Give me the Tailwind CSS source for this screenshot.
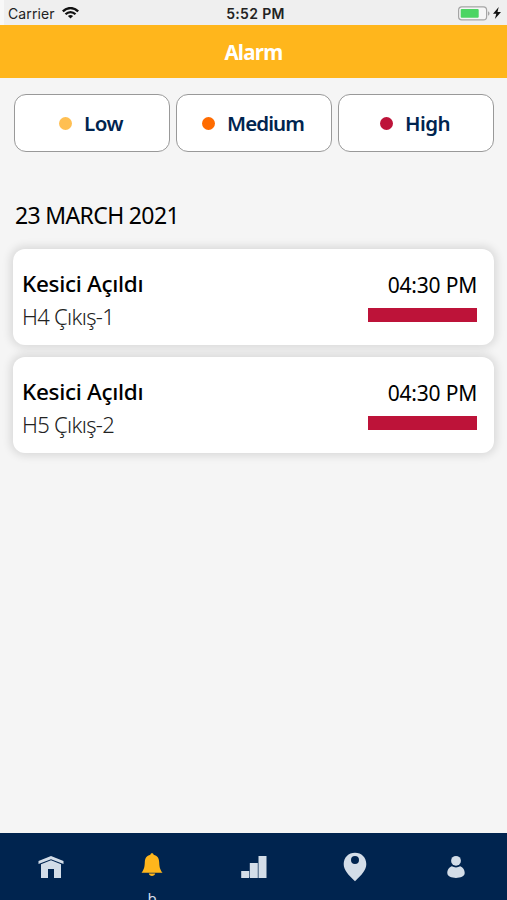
<!DOCTYPE html>
<html lang="tr">
<head>
<meta charset="utf-8">
<title>Alarm</title>
<script src="https://cdn.jsdelivr.net/npm/@tailwindcss/browser@4"></script>
</head>
<body class="w-[507px] h-[900px] overflow-hidden bg-[#f5f5f5] font-['Noto_Sans',sans-serif] text-black">
<div class="flex h-[900px] flex-col">
  <div class="grid h-[25px] shrink-0 grid-cols-3 items-center border-l-4 border-[#f8f8f8] bg-[#efefef] pt-[3px] font-['Inter',sans-serif] text-[14px] leading-none text-[#222]">
    <div class="flex items-center gap-[7px] pl-1">
      <span class="tracking-[0.1px]">Carrier</span>
      <svg class="mb-0.5 h-3 w-[17px]" viewBox="0 0 17 12" fill="none" stroke="#111" stroke-width="2.3"><path d="M.8 4.4C5.2-.1 11.8-.1 16.2 4.4M3.5 7.2c2.9-2.9 7.1-2.9 10 0"/><path d="M8.5 11.6 5.9 9c1.4-1.4 3.8-1.4 5.2 0z" fill="#111" stroke="none"/></svg>
    </div>
    <span class="text-center text-[14px] font-semibold tracking-[0.35px] whitespace-nowrap">5:52 PM</span>
    <div class="flex items-center justify-end gap-[3px] pr-[6px] pb-[2px]">
      <svg class="h-[15px] w-8" viewBox="0 0 32 15"><rect x=".6" y=".9" width="28" height="13" rx="3.2" fill="#f6f6f6" stroke="#a5a5a5" stroke-width="1.2"/><rect x="2.7" y="3" width="18" height="8.8" rx="1" fill="#4cd563"/><path d="M30 5.200c2 .8 2 3.700 0 4.500z" fill="#a5a5a5"/></svg>
      <svg class="h-3 w-2" viewBox="0 0 8 12"><path d="M5.700 0 0 6.800h3.300L1.900 12 8 4.900H4.500z" fill="#111"/></svg>
    </div>
  </div>
  <header class="flex h-[53px] shrink-0 items-center justify-center bg-[#ffb61c] pt-0.5 text-[20.5px] font-bold tracking-[-0.7px] text-white"><h1>Alarm</h1></header>

  <main class="flex-1 px-[13px] pt-4">
    <div class="grid grid-cols-3 gap-1.5 pl-px text-[20.5px] font-semibold text-[#00244f]">
      <button class="flex h-[58px] items-center justify-center gap-[12px] rounded-xl border border-[#999] bg-white pr-[2px]"><span class="size-[13px] rounded-full bg-[#ffbf52]"></span><span class="tracking-[-0.4px]">Low</span></button>
      <button class="flex h-[58px] items-center justify-center gap-[12px] rounded-xl border border-[#999] bg-white pr-[2px]"><span class="size-[13px] rounded-full bg-[#ff6b00]"></span><span class="tracking-[-0.9px]">Medium</span></button>
      <button class="flex h-[58px] items-center justify-center gap-[12px] rounded-xl border border-[#999] bg-white pr-[2px]"><span class="size-[13px] rounded-full bg-[#bd1339]"></span><span class="tracking-[-0.6px]">High</span></button>
    </div>
    <h2 class="mt-[46px] ml-0.5 h-[35px] text-[23px] leading-[34px] tracking-[-0.65px]">23 MARCH 2021</h2>
    <div class="mt-4 flex flex-col gap-3">
      <article class="flex h-[96px] justify-between rounded-xl bg-white pt-[17px] pr-[17px] pl-[9px] shadow-[0_0_9px_3px_rgba(0,0,0,0.11)]">
        <div>
          <h3 class="h-[33px] text-[22.5px] leading-[36px] font-medium tracking-[-0.3px]">Kesici Açıldı</h3>
          <p class="h-[33px] text-[22px] leading-[35px] font-light tracking-[-0.7px] text-[#222]">H4 Çıkış-1</p>
        </div>
        <div class="flex flex-col items-end">
          <time class="h-[42px] text-[21px] leading-[39px] tracking-[-0.2px]">04:30 PM</time>
          <span class="h-[14px] w-[109px] bg-[#bd1339]"></span>
        </div>
      </article>
      <article class="flex h-[96px] justify-between rounded-xl bg-white pt-[17px] pr-[17px] pl-[9px] shadow-[0_0_9px_3px_rgba(0,0,0,0.11)]">
        <div>
          <h3 class="h-[33px] text-[22.5px] leading-[36px] font-medium tracking-[-0.3px]">Kesici Açıldı</h3>
          <p class="h-[33px] text-[22px] leading-[35px] font-light tracking-[-0.7px] text-[#222]">H5 Çıkış-2</p>
        </div>
        <div class="flex flex-col items-end">
          <time class="h-[42px] text-[21px] leading-[39px] tracking-[-0.2px]">04:30 PM</time>
          <span class="h-[14px] w-[109px] bg-[#bd1339]"></span>
        </div>
      </article>
    </div>
  </main>

  <nav class="grid h-[67px] shrink-0 grid-cols-5 overflow-hidden bg-[#00244f] text-[#d3dde8]">
    <a class="flex justify-center pt-[22px]"><svg class="h-6 w-[26px]" viewBox="0 0 26 24" fill="currentColor"><path d="M.5 6 13 1l12.500 5v3L13 4.200.5 9z"/><path d="M3 9.300 13 5.200l10 4.100V23h-7v-9h-6v9H3z"/></svg></a>
    <a class="flex flex-col items-center pt-[20px] text-[#ffb61c]"><svg class="h-6 w-[22px] shrink-0" viewBox="0 0 22 24" fill="currentColor"><path d="M11 .3c1 0 1.500.6 1.600 1.400 3.900.8 5.400 3.600 5.600 7.500.2 5 .8 7.300 3.300 10.600H.5c2.500-3.300 3.100-5.600 3.300-10.600.2-3.900 1.700-6.700 5.600-7.500C9.500.9 10 .3 11 .3zM7.800 20.500h6.400c-.3 3.300-6.100 3.300-6.400 0z"/></svg><span class="mt-[11px] text-[15px] leading-5 text-[#d3dde8]">b</span></a>
    <a class="flex justify-center pt-[22px] pl-[2px]"><svg class="h-6 w-[26px]" viewBox="0 0 26 24" fill="currentColor"><path d="M.2 16h8v7h-8zM8.800 8h8v15h-8zM17.500 1h8v22h-8z"/></svg></a>
    <a class="flex justify-center pt-[19px]"><svg class="h-[30px] w-6" viewBox="0 0 24 30" fill="currentColor"><path fill-rule="evenodd" d="M12 .8C5.500.8.700 5.600.700 12 .7 18 5 22.500 12 29.300 19 22.500 23.300 18 23.300 12 23.300 5.600 18.500.8 12 .8zm0 3.200a4 4 0 1 1 0 8 4 4 0 0 1 0-8z"/></svg></a>
    <a class="flex justify-center pt-[22px]"><svg class="h-6 w-[18px]" viewBox="0 0 18 24" fill="currentColor"><circle cx="9" cy="5.800" r="4.900"/><path d="M4.800 11.300c2.500 1.500 5.900 1.500 8.400 0 2.600.8 4.500 3.800 4.500 6.800 0 6.500-17.400 6.500-17.400 0 0-3 1.900-6 4.500-6.800z"/></svg></a>
  </nav>
</div>
</body>
</html>
